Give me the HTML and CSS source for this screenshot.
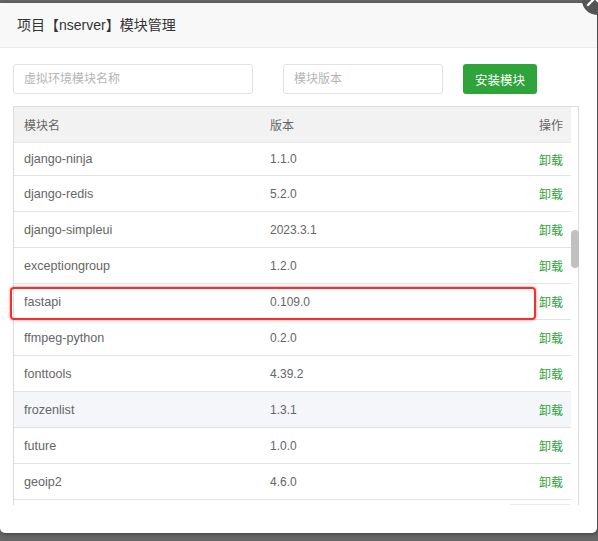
FILE: index.html
```html
<!DOCTYPE html>
<html lang="zh">
<head>
<meta charset="utf-8">
<title>模块管理</title>
<link rel="stylesheet" href="styles.css">
</head>
<body>
<div class="modal">
  <div class="modal-head">项目【nserver】模块管理</div>
  <div class="toolbar">
    <input class="field field-name" type="text" placeholder="虚拟环境模块名称">
    <input class="field field-ver" type="text" placeholder="模块版本">
    <button class="btn-install" type="button">安装模块</button>
  </div>
  <div class="table-wrap">
    <div class="table-scroll">
      <div class="row row-head">
        <div class="cell c-name">模块名</div>
        <div class="cell c-ver">版本</div>
        <div class="cell c-op">操作</div>
      </div>
      <div class="rows">
        <div class="row row-first"><div class="cell c-name">django-ninja</div><div class="cell c-ver">1.1.0</div><div class="cell c-op"><a class="link">卸载</a></div></div>
        <div class="row"><div class="cell c-name">django-redis</div><div class="cell c-ver">5.2.0</div><div class="cell c-op"><a class="link">卸载</a></div></div>
        <div class="row"><div class="cell c-name">django-simpleui</div><div class="cell c-ver">2023.3.1</div><div class="cell c-op"><a class="link">卸载</a></div></div>
        <div class="row"><div class="cell c-name">exceptiongroup</div><div class="cell c-ver">1.2.0</div><div class="cell c-op"><a class="link">卸载</a></div></div>
        <div class="row"><div class="cell c-name">fastapi</div><div class="cell c-ver">0.109.0</div><div class="cell c-op"><a class="link">卸载</a></div></div>
        <div class="row"><div class="cell c-name">ffmpeg-python</div><div class="cell c-ver">0.2.0</div><div class="cell c-op"><a class="link">卸载</a></div></div>
        <div class="row"><div class="cell c-name">fonttools</div><div class="cell c-ver">4.39.2</div><div class="cell c-op"><a class="link">卸载</a></div></div>
        <div class="row row-hover"><div class="cell c-name">frozenlist</div><div class="cell c-ver">1.3.1</div><div class="cell c-op"><a class="link">卸载</a></div></div>
        <div class="row"><div class="cell c-name">future</div><div class="cell c-ver">1.0.0</div><div class="cell c-op"><a class="link">卸载</a></div></div>
        <div class="row"><div class="cell c-name">geoip2</div><div class="cell c-ver">4.6.0</div><div class="cell c-op"><a class="link">卸载</a></div></div>
      </div>
    </div>
    <div class="scroll-gutter"><div class="thumb"></div></div>
    <div class="hbar"></div>
  </div>
  <div class="highlight"></div>
  <div class="close-btn">
    <svg width="30" height="30" viewBox="0 0 30 30"><path d="M6 6 L20 20 M20 6 L6 20" stroke="#fff" stroke-width="2.4" stroke-linecap="round" fill="none"/></svg>
  </div>
</div>
</body>
</html>
```

FILE: styles.css
```css
html, body {
  margin: 0;
  padding: 0;
}
body {
  background: #666;
  width: 598px;
  height: 541px;
  overflow: hidden;
  padding-top: 3px;
  box-sizing: border-box;
  font-family: "Liberation Sans", "Noto Sans CJK SC", sans-serif;
}
.modal {
  position: relative;
  width: 597px;
  height: 530px;
  background: #fff;
  border-radius: 0 0 5px 5px;
  box-shadow: 1px 1px 4px rgba(0,0,0,0.4);
}
.modal-head {
  height: 44px;
  line-height: 44px;
  background: #f8f8f8;
  border-bottom: 1px solid #ececec;
  padding-left: 17px;
  font-size: 14px;
  color: #333;
}
.toolbar {
  display: flex;
  align-items: center;
  padding: 16px 0 0 13px;
  height: 30px;
}
.field {
  box-sizing: border-box;
  height: 30px;
  border: 1px solid #e2e2e2;
  border-radius: 3px;
  padding: 0 10px;
  font-family: "Liberation Sans", "Noto Sans CJK SC", sans-serif;
  font-size: 12px;
  color: #555;
  outline: none;
  background: #fff;
}
.field::placeholder { color: #b5b5b5; }
.field-name { width: 240px; margin-right: 30px; }
.field-ver { width: 160px; margin-right: 20px; }
.btn-install {
  box-sizing: border-box;
  width: 74px;
  height: 30px;
  border: none;
  border-radius: 3px;
  background: #2ea43a;
  color: #fff;
  font-family: "Liberation Sans", "Noto Sans CJK SC", sans-serif;
  font-size: 12.5px;
  padding: 0;
}
.table-wrap {
  position: relative;
  display: flex;
  margin: 12px 0 0 13px;
  width: 566px;
  height: 399px;
  box-sizing: border-box;
  border: 1px solid #dcdcdc;
  border-bottom: none;
}
.table-scroll {
  width: 557px;
  overflow: hidden;
}
.scroll-gutter {
  position: relative;
  flex: 1;
  background: #fff;
}
.thumb {
  position: absolute;
  left: 0;
  top: 123px;
  width: 8px;
  height: 38px;
  border-radius: 4px;
  background: #c1c1c1;
}
.hbar {
  position: absolute;
  right: 8px;
  bottom: 0;
  width: 60px;
  height: 1px;
  background: #e8ecf2;
}
.row {
  display: grid;
  grid-template-columns: 246px 1fr 80px;
  height: 36px;
  box-sizing: border-box;
  border-bottom: 1px solid #e2e2e2;
  align-items: center;
  font-size: 12px;
  color: #666;
}
.row-head {
  background: #f2f2f2;
  border-bottom-color: #e6e8ee;
}
.row-first { height: 33px; }
.row-hover { background: #f4f6fa; }
.cell { white-space: nowrap; }
.c-name { padding-left: 10px; }
.rows .c-name { font-size: 12.6px; }
.c-ver { padding-left: 10px; }
.c-op { text-align: right; padding-right: 8px; }
.link {
  color: #2ea43a;
  cursor: pointer;
}
.highlight {
  position: absolute;
  left: 10px;
  top: 284px;
  width: 526px;
  height: 33px;
  box-sizing: border-box;
  border: 2px solid #f2312b;
  border-radius: 4px;
  box-shadow: 0 0 3px rgba(240, 40, 40, 0.6);
}
.close-btn {
  position: absolute;
  left: 582px;
  top: -18px;
  width: 30px;
  height: 30px;
  border-radius: 50%;
  background: #555;
}
.close-btn svg { display: block; }
```
